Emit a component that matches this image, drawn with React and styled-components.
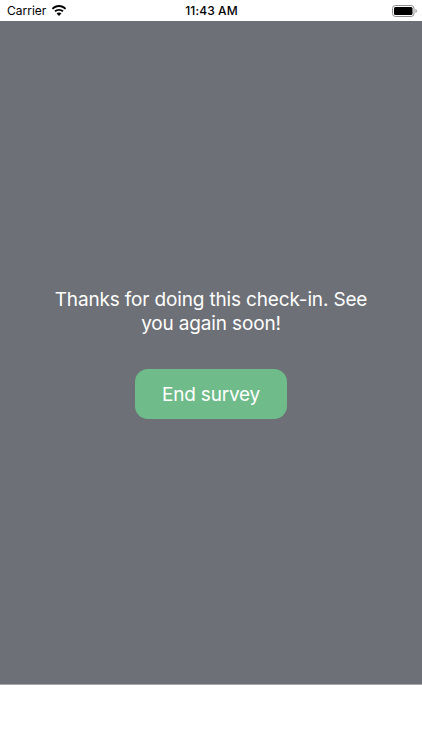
import styled, { createGlobalStyle } from "styled-components";

const GlobalStyle = createGlobalStyle`
  html, body {
    margin: 0;
    padding: 0;
    background: #fff;
  }
  * {
    box-sizing: border-box;
  }
`;

const Page = styled.div`
  width: 422px;
  height: 750px;
  display: flex;
  flex-direction: column;
  overflow: hidden;
  background: #fff;
  font-family: Inter, "Liberation Sans", sans-serif;
`;

const StatusBar = styled.div`
  height: 21px;
  flex: none;
  display: grid;
  grid-template-columns: 1fr auto 1fr;
  align-items: center;
  padding: 0 5px 0 7px;
  color: #000;
`;

const StatusLeft = styled.div`
  display: flex;
  align-items: center;
  gap: 5px;
  font-size: 12px;
`;

const Clock = styled.div`
  font-size: 12px;
  font-weight: 500;
  letter-spacing: 0.1px;
  margin-left: -1px;
`;

const StatusRight = styled.div`
  display: flex;
  justify-content: flex-end;
  align-items: center;
`;

const Screen = styled.main`
  height: 664px;
  flex: none;
  background: #6d7076;
  border-bottom: 1px solid #a5a7aa;
  display: flex;
  flex-direction: column;
  align-items: center;
  justify-content: center;
  padding: 2px 40px 0;
`;

const Message = styled.p`
  margin: 0 0 33px;
  color: #fff;
  font-size: 19px;
  letter-spacing: -0.16px;
  line-height: 24px;
  text-align: center;
`;

const EndButton = styled.button`
  width: 152px;
  height: 50px;
  border: none;
  border-radius: 13px;
  background: #6fbb8a;
  color: #fff;
  font-family: inherit;
  font-size: 19px;
  letter-spacing: -0.2px;
`;

function WifiIcon() {
  return (
    <svg width="16" height="12" viewBox="0 0 16 12" fill="#000">
      <path d="M8 2.1c2.2 0 4.3.9 5.9 2.4L15.2 3.2C13.2 1.2 10.7 0 8 0S2.8 1.2.8 3.2l1.3 1.3C3.7 3 5.8 2.1 8 2.1z" />
      <path d="M8 5.8c1.2 0 2.4.5 3.3 1.3l1.3-1.3C11.4 4.6 9.7 3.9 8 3.9s-3.4.7-4.6 1.9l1.3 1.3C5.6 6.3 6.8 5.8 8 5.8z" />
      <path d="M8 7.5c-.9 0-1.7.3-2.4 1L8 11l2.4-2.5c-.7-.7-1.5-1-2.4-1z" />
    </svg>
  );
}

function BatteryIcon() {
  return (
    <svg width="25" height="12" viewBox="0 0 25 12">
      <rect x="0.5" y="0.5" width="21.5" height="11" rx="3" fill="none" stroke="#8e8e8e" />
      <rect x="2" y="2" width="18.5" height="8" rx="1.5" fill="#000" />
      <path d="M23.5 4v4c.7-.2 1.3-1.1 1.3-2s-.6-1.8-1.3-2z" fill="#8e8e8e" />
    </svg>
  );
}

export default function App() {
  return (
    <>
      <GlobalStyle />
      <Page>
        <StatusBar>
          <StatusLeft>
            Carrier
            <WifiIcon />
          </StatusLeft>
          <Clock>11:43 AM</Clock>
          <StatusRight>
            <BatteryIcon />
          </StatusRight>
        </StatusBar>
        <Screen>
          <Message>Thanks for doing this check-in. See you again soon!</Message>
          <EndButton>End survey</EndButton>
        </Screen>
      </Page>
    </>
  );
}
